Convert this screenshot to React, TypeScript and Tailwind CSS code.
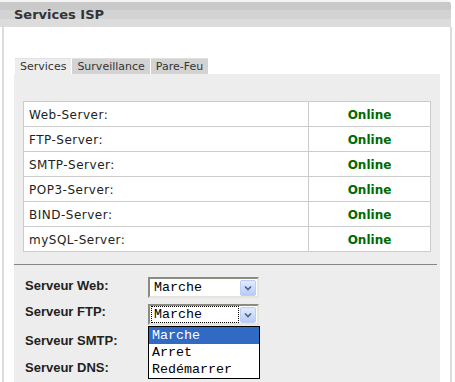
import React from "react";

const servers = [
  "Web-Server:",
  "FTP-Server:",
  "SMTP-Server:",
  "POP3-Server:",
  "BIND-Server:",
  "mySQL-Server:",
];

function Arrow() {
  return (
    <div className="w-[16px] h-[16px] rounded-[2px] border border-[#bccdf6] bg-[linear-gradient(to_bottom,#e3ebfd,#b7cbf6)] flex items-center justify-center">
      <svg width="8" height="6" viewBox="0 0 8 6">
        <path d="M1 1.5 L4 4.5 L7 1.5" fill="none" stroke="#4b5f87" strokeWidth="1.6" />
      </svg>
    </div>
  );
}

function Select({ focused }: { focused?: boolean }) {
  return (
    <div className="w-[111px] h-[21px] border-2 border-t-[#8b8b80] border-l-[#8b8b80] border-b-[#e6e4dc] border-r-[#e6e4dc] bg-white flex items-center pr-[1px]">
      <div
        className={
          "flex-1 h-[17px] flex items-center pl-[2px] pt-[1px] ml-[1px] mr-[1px] font-['Liberation_Mono',monospace] text-[13.33px] text-black " +
          (focused ? "border border-dotted border-black" : "border border-transparent")
        }
      >
        Marche
      </div>
      <Arrow />
    </div>
  );
}

const labelCls = "w-[123px] font-['Liberation_Sans',Arial,sans-serif] text-[13px] font-bold text-[#222]";

export default function App() {
  return (
    <div className="w-[455px] h-[382px] overflow-hidden bg-white font-['DejaVu_Sans',sans-serif]">
      <div className="w-[451px] h-[27px] rounded-tr-[5px] bg-[linear-gradient(to_bottom,#f4f4f4_0px,#f4f4f4_2px,#c9c9c9_2px,#c9c9c9_10px,#d3d3d3_10px,#d3d3d3_19px,#dcdcdc_19px,#dcdcdc_27px)] pl-[14px] pt-[7px]">
        <div className="text-[13px] leading-[15px] font-bold text-[#333]">Services ISP</div>
      </div>
      <div className="ml-[2px] w-[450px] h-[355px] border-x-2 border-[#dddddd] px-[10px] pt-[31px] flex flex-col">
        <div className="flex gap-[1px] pl-[1px] h-[16px]">
          <div className="px-[5px] bg-[#ededed] border-t border-[#e2e2e2] text-[11px] leading-[15px] text-[#333]">Services</div>
          <div className="px-[5px] bg-[#d3d3d3] border-t border-[#e0e0e0] text-[11px] leading-[15px] text-[#333]">Surveillance</div>
          <div className="px-[5px] bg-[#d3d3d3] border-t border-[#e0e0e0] text-[11px] leading-[15px] text-[#333]">Pare-Feu</div>
        </div>
        <div className="flex-1 bg-[#ededed] pt-[27px] px-[9px]">
          <table className="w-[408px] border-collapse bg-white">
            <tbody>
              {servers.map((s) => (
                <tr key={s}>
                  <td className="w-[285px] h-[25px] border border-[#cccccc] pl-[5px] pt-[1px] text-[12px] tracking-[0.5px] text-[#222]">
                    {s}
                  </td>
                  <td className="h-[25px] border border-[#cccccc] text-center pt-[1px] text-[12px] font-bold text-[#006a00]">
                    Online
                  </td>
                </tr>
              ))}
            </tbody>
          </table>
          <div className="mt-[12px] -mx-[9px] mr-[-6px] h-[1px] bg-[#858585]" />
          <div className="-ml-[9px] pl-[11px] pt-[12px] flex flex-col">
            <div className="flex items-center h-[21px]">
              <div className={labelCls + " -mt-[3px]"}>Serveur Web:</div>
              <Select />
            </div>
            <div className="flex items-center h-[21px] mt-[6px]">
              <div className={labelCls + " -mt-[5px]"}>Serveur FTP:</div>
              <div className="relative">
                <Select focused />
                <div className="absolute left-0 top-[22px] w-[112px] border border-black bg-white font-['Liberation_Mono',monospace] text-[13.33px] leading-[17px] z-10">
                  <div className="bg-[#316ac5] text-white pl-[3px] h-[17px]">Marche</div>
                  <div className="text-black pl-[3px] h-[17px]">Arret</div>
                  <div className="text-black pl-[3px] h-[17px]">Redémarrer</div>
                </div>
              </div>
            </div>
            <div className="flex items-center h-[21px] mt-[5px]">
              <div className={labelCls}>Serveur SMTP:</div>
            </div>
            <div className="flex items-center h-[21px] mt-[6px]">
              <div className={labelCls}>Serveur DNS:</div>
            </div>
          </div>
        </div>
      </div>
    </div>
  );
}
